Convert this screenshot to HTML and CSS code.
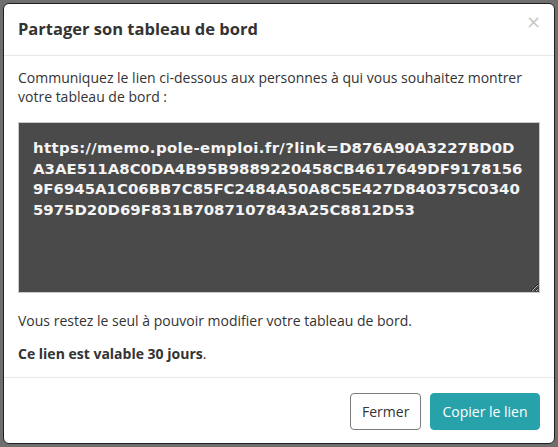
FILE: index.html
```html
<!DOCTYPE html>
<html lang="fr">
<head>
<meta charset="utf-8">
<title>Partager son tableau de bord</title>
<link rel="stylesheet" href="styles.css">
</head>
<body>
<div class="modal">
  <div class="modal-header">
    <h4 class="modal-title">Partager son tableau de bord</h4>
    <button class="close" type="button" aria-label="Fermer">×</button>
  </div>
  <div class="modal-body">
    <p class="intro">Communiquez le lien ci-dessous aux personnes à qui vous souhaitez montrer votre tableau de bord :</p>
    <div class="link" role="textbox" aria-readonly="true" aria-multiline="true"><span class="link-base">https://memo.pole-emploi.fr/?link=</span>D876A90A3227BD0DA3AE511A8C0DA4B95B9889220458CB4617649DF91781569F6945A1C06BB7C85FC2484A50A8C5E427D840375C03405975D20D69F831B7087107843A25C8812D53</div>
    <p class="note">Vous restez le seul à pouvoir modifier votre tableau de bord.</p>
    <p class="note"><strong>Ce lien est valable 30 jours</strong>.</p>
  </div>
  <div class="modal-footer">
    <button class="btn btn-default" type="button">Fermer</button>
    <button class="btn btn-primary" type="button">Copier le lien</button>
  </div>
</div>
</body>
</html>
```
FILE: styles.css
```css
html, body {
  margin: 0;
  padding: 0;
}
body {
  background: #6e6e6e;
  padding: 3px;
  font-family: "Open Sans", "Noto Sans", sans-serif;
  font-size: 14px;
  color: #333;
}
.modal {
  box-sizing: border-box;
  width: 552px;
  height: 441px;
  background: #fff;
  border: 1px solid #1e1e1e;
  border-radius: 6px;
  display: flex;
  flex-direction: column;
}
.modal-header {
  position: relative;
  padding: 14px 15px 15px 14px;
  border-bottom: 1px solid #e8e8e8;
}
.modal-title {
  margin: 0;
  font-size: 16.5px;
  line-height: 22px;
  font-weight: 700;
  color: #333;
}
.close {
  position: absolute;
  top: 8px;
  right: 13px;
  border: 0;
  background: none;
  padding: 0;
  font-family: "DejaVu Sans", sans-serif;
  font-size: 18px;
  line-height: 20px;
  color: #c8c8c8;
}
.modal-body {
  flex: 1;
  padding: 13px 15px 0 14px;
}
.intro {
  margin: 0 0 16px;
  line-height: 18.5px;
}
.link {
  box-sizing: border-box;
  width: 522px;
  height: 171px;
  margin: 0 0 19px;
  padding: 15px 14.5px 15px 14px;
  background: #4a4a4a;
  border: 1px solid #c9c9c9;
  color: #f4f4f4;
  font-family: "DejaVu Sans", Verdana, sans-serif;
  font-weight: 700;
  font-size: 14.92px;
  line-height: 20.5px;
  word-break: break-all;
  overflow: auto;
  resize: vertical;
}
.link-base {
  letter-spacing: 0.35px;
}
.note {
  margin: 0 0 14px;
  line-height: 18.5px;
}
.modal-footer {
  display: flex;
  justify-content: flex-end;
  gap: 9px;
  padding: 15px 14px 14px;
  border-top: 1px solid #e8e8e8;
}
.btn {
  font-family: "Open Sans", "Noto Sans", sans-serif;
  font-size: 14px;
  height: 37px;
  padding: 0 11px;
  border-radius: 4px;
  cursor: pointer;
}
.btn-default {
  background: #fff;
  color: #333;
  border: 1px solid #7a7a7a;
  width: 71px;
}
.btn-primary {
  background: #27a2ab;
  color: #fff;
  border: 1px solid #27a2ab;
  width: 110px;
}
```
